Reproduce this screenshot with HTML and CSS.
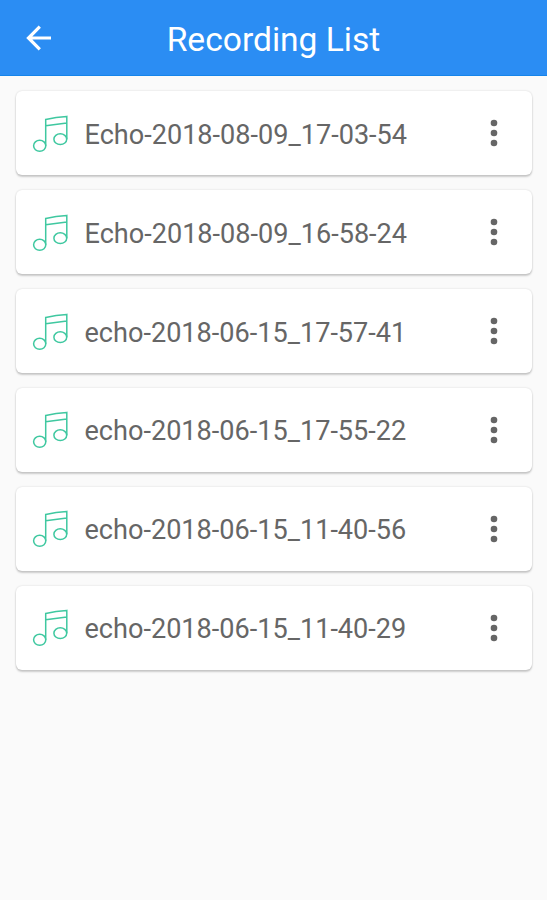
FILE: index.html
```html
<!DOCTYPE html>
<html lang="en">
<head>
  <meta charset="UTF-8" />
  <meta name="viewport" content="width=device-width, initial-scale=1.0"/>
  <title>Recording List</title>
  <link rel="stylesheet" href="styles.css">
</head>
<body>

  <!-- Icons -->
  <svg class="hidden">
    <symbol id="note" viewBox="0 0 38 40">
      <ellipse cx="7.7" cy="31.8" rx="6.1" ry="5.5"/>
      <ellipse cx="28.3" cy="25.2" rx="6.4" ry="5.4"/>
      <path d="M13.7 31.8V5.4Q24 3 34.8 2.4V25.2M13.7 11.8Q24 10.4 34.8 8.9"/>
    </symbol>
    <symbol id="more" viewBox="0 0 10 30">
      <circle cx="5" cy="5" r="3.3"/>
      <circle cx="5" cy="15" r="3.3"/>
      <circle cx="5" cy="25" r="3.3"/>
    </symbol>
  </svg>

  <header>
    <svg class="back" viewBox="0 0 26 26"><path d="M25 13H2.5M13.8 1.7L2.5 13l11.3 11.3"/></svg>
    <h1>Recording List</h1>
  </header>

  <div class="recordings">
    <div class="card">
      <svg class="note"><use href="#note"/></svg>
      <span class="name">Echo-2018-08-09_17-03-54</span>
      <svg class="more"><use href="#more"/></svg>
    </div>
    <div class="card">
      <svg class="note"><use href="#note"/></svg>
      <span class="name">Echo-2018-08-09_16-58-24</span>
      <svg class="more"><use href="#more"/></svg>
    </div>
    <div class="card">
      <svg class="note"><use href="#note"/></svg>
      <span class="name">echo-2018-06-15_17-57-41</span>
      <svg class="more"><use href="#more"/></svg>
    </div>
    <div class="card">
      <svg class="note"><use href="#note"/></svg>
      <span class="name">echo-2018-06-15_17-55-22</span>
      <svg class="more"><use href="#more"/></svg>
    </div>
    <div class="card">
      <svg class="note"><use href="#note"/></svg>
      <span class="name">echo-2018-06-15_11-40-56</span>
      <svg class="more"><use href="#more"/></svg>
    </div>
    <div class="card">
      <svg class="note"><use href="#note"/></svg>
      <span class="name">echo-2018-06-15_11-40-29</span>
      <svg class="more"><use href="#more"/></svg>
    </div>
  </div>

</body>
</html>
```
FILE: styles.css
```css
* {
  box-sizing: border-box;
  font-family: Roboto, sans-serif;
}
body {
  margin: 0;
  background: #fafafa;
  min-height: 100vh;
}
.hidden { display: none; }

/* === Header === */
header {
  display: flex;
  align-items: center;
  height: 76px;
  padding: 0 26px;
  background: #2b8df3;
  border-bottom: 1px solid #1584ea;
  color: white;
}
.back {
  width: 26px;
  height: 26px;
  margin-top: 1px;
  fill: none;
  stroke: white;
  stroke-width: 3.2;
}
h1 {
  flex: 1;
  margin: 4px 26px 0 0;
  font-size: 33.6px;
  font-weight: 400;
  text-align: center;
}

/* === Recordings === */
.recordings {
  display: flex;
  flex-direction: column;
  gap: 14.9px;
  padding: 15.3px 15px 0 16px;
}
.card {
  display: flex;
  align-items: center;
  height: 84px;
  padding: 0 33px 0 16px;
  background: white;
  border-radius: 6px;
  box-shadow: 0 0 2px rgba(0, 0, 0, 0.16), 0 2px 2px rgba(0, 0, 0, 0.18);
}
.note {
  width: 38px;
  height: 40px;
  margin-top: 1px;
  fill: none;
  stroke: #3fc8a0;
  stroke-width: 1.5;
}
.name {
  flex: 1;
  margin: 3px 0 0 14.5px;
  color: #666;
  font-size: 27.1px;
}
.more {
  width: 10px;
  height: 30px;
  fill: #666;
}
```
